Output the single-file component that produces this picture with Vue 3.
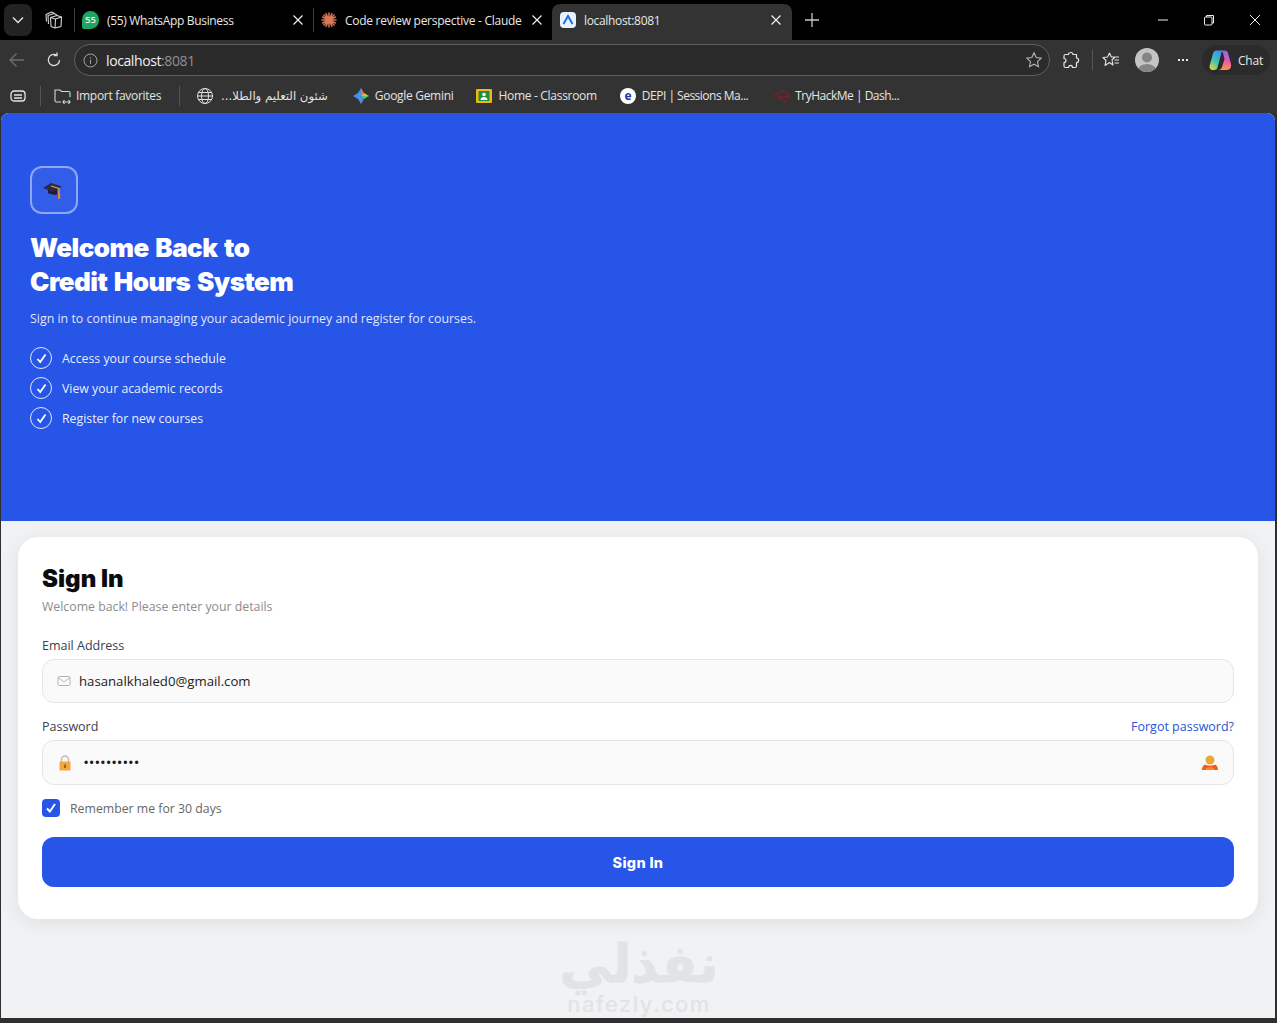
<script setup>
const features = ['Access your course schedule', 'View your academic records', 'Register for new courses']
</script>

<template>
  <div class="window">
    <div class="tabstrip">
      <button class="tab-menu" type="button">
        <svg width="14" height="14" viewBox="0 0 14 14"><path d="M2 4.500 7 9.500 12 4.500" fill="none" stroke="#e8e8e8" stroke-width="1.300" /></svg>
      </button>
      <svg class="workspaces" width="18" height="18" viewBox="0 0 18 18" fill="none" stroke="#d8d8d8" stroke-width="1.100" stroke-linejoin="round">
        <path d="M5.500 6.500 6 15.500 10 17 16 15.500 16.500 6 12 4.500Z" />
        <path d="M10 17 10.500 8 16.500 6M5.500 6.500 10.500 8" />
        <path d="M3.500 13 3 4.500 9 2.500 12 4M1.500 10.500 1 3.500 6.500 1 9 2" />
      </svg>
      <span class="tab-sep"></span>
      <div class="tab tab-wa">
        <span class="wa-badge">55</span>
        <span class="tab-title">(55) WhatsApp Business</span>
        <svg class="tab-x" width="12" height="12" viewBox="0 0 12 12"><path d="M1.500 1.500 10.500 10.500M10.500 1.500 1.500 10.500" stroke="#f0f0f0" stroke-width="1.200" /></svg>
      </div>
      <span class="tab-sep"></span>
      <div class="tab tab-claude">
        <svg width="16" height="16" viewBox="0 0 16 16" stroke="#d97757" stroke-width="1.500" stroke-linecap="round">
          <path d="M8 1v14M1 8h14M3 3l10 10M13 3 3 13M5 1.600l6 12.800M11 1.600 5 14.400M1.600 5l12.800 6M14.400 5 1.600 11" />
        </svg>
        <span class="tab-title">Code review perspective - Claude</span>
        <svg class="tab-x" width="12" height="12" viewBox="0 0 12 12"><path d="M1.500 1.500 10.500 10.500M10.500 1.500 1.500 10.500" stroke="#f0f0f0" stroke-width="1.200" /></svg>
      </div>
      <div class="tab tab-active">
        <span class="vite-icon">
          <svg width="12" height="12" viewBox="0 0 12 12"><path d="M1.500 10 6 2 10.500 10" fill="none" stroke="#1a73e8" stroke-width="2" /></svg>
        </span>
        <span class="tab-title">localhost:8081</span>
        <svg class="tab-x" width="12" height="12" viewBox="0 0 12 12"><path d="M1.500 1.500 10.500 10.500M10.500 1.500 1.500 10.500" stroke="#f0f0f0" stroke-width="1.200" /></svg>
      </div>
      <svg class="tab-plus" width="16" height="16" viewBox="0 0 16 16"><path d="M8 1v14M1 8h14" stroke="#c8c8c8" stroke-width="1.300" /></svg>
      <div class="win-controls">
        <svg width="12" height="12" viewBox="0 0 12 12"><path d="M1 6h10" stroke="#eee" stroke-width="1" /></svg>
        <svg width="12" height="12" viewBox="0 0 12 12" fill="none" stroke="#eee"><rect x="1.500" y="3" width="7.500" height="8" rx="1" /><path d="M3.500 3V1.500h7V9H9" /></svg>
        <svg width="12" height="12" viewBox="0 0 12 12"><path d="M1 1 11 11M11 1 1 11" stroke="#eee" stroke-width="1" /></svg>
      </div>
    </div>

    <div class="toolbar">
      <svg class="nav-back" width="18" height="18" viewBox="0 0 18 18" fill="none" stroke="#6d6d6d" stroke-width="1.300"><path d="M16 9H2M8.500 2.500 2 9l6.500 6.500" /></svg>
      <svg class="nav-reload" width="16" height="16" viewBox="0 0 16 16" fill="none" stroke="#dcdcdc" stroke-width="1.300"><path d="M13.500 8A5.600 5.600 0 1 1 10.800 3.200" /><path d="M11 .5v3.200H7.800" /></svg>
      <div class="address">
        <svg width="15" height="15" viewBox="0 0 15 15" fill="none" stroke="#a0a0a0"><circle cx="7.500" cy="7.500" r="6.500" /><path d="M7.500 6.500v4.500M7.500 4v1.200" /></svg>
        <span class="url">localhost<span class="url-port">:8081</span></span>
        <svg class="addr-star" width="18" height="18" viewBox="0 0 18 18" fill="none" stroke="#b4b4b4" stroke-width="1.100"><path d="M9 1.800l2.200 4.700 5 .6-3.700 3.500 1 5.100L9 13.200l-4.500 2.500 1-5.100L1.800 7.100l5-.6z" /></svg>
      </div>
      <svg class="tool-ext" width="18" height="18" viewBox="0 0 18 18" fill="none" stroke="#e4e4e4" stroke-width="1.200" stroke-linejoin="round"><path d="M6.500 3.500C6.500 .8 11 .8 11 3.500h3.500V7c2.800 0 2.800 4.500 0 4.500V15a1.500 1.500 0 0 1-1.500 1.500H10.500c0-2.800-4-2.800-4 0H3.500A1.500 1.500 0 0 1 2 15V11.500c2.600 0 2.600-4 0-4V5a1.500 1.500 0 0 1 1.500-1.500Z" /></svg>
      <span class="tool-sep"></span>
      <svg class="tool-fav" width="18" height="18" viewBox="0 0 18 18" fill="none" stroke="#e4e4e4" stroke-width="1.100" stroke-linejoin="round"><path d="M7.500 2 9.300 6H13L10 9 11 14 7.500 11.500 3 14.500 4 9.500 1 6.500 5.500 6ZM12.500 9h4.500M12.500 12h4.500M13.500 6H17" /></svg>
      <span class="avatar">
        <svg width="24" height="24" viewBox="0 0 24 24"><circle cx="12" cy="9.500" r="5" fill="#858585" /><ellipse cx="12" cy="22" rx="9" ry="6" fill="#858585" /></svg>
      </span>
      <span class="tool-more">
        <i></i><i></i><i></i>
      </span>
      <div class="chat-pill">
        <svg width="24" height="24" viewBox="0 0 24 24">
          <defs>
            <linearGradient id="cp-left" x1="0.700" y1="0" x2="0.200" y2="1">
              <stop offset="0" stop-color="#3f8ff0" />
              <stop offset="0.550" stop-color="#3fc7b0" />
              <stop offset="1" stop-color="#e6d23c" />
            </linearGradient>
            <linearGradient id="cp-right" x1="0.600" y1="0" x2="0.500" y2="1">
              <stop offset="0" stop-color="#7f6cf0" />
              <stop offset="0.500" stop-color="#e458b4" />
              <stop offset="1" stop-color="#f79a3e" />
            </linearGradient>
          </defs>
          <path d="M8.500 2.500h5.500L9.500 19.500c-.6 1.800-1.800 2.500-3.500 2.500H5C2.500 22 1 20 1.700 17.500L5 5.500C5.500 3.500 6.700 2.500 8.500 2.500Z" fill="url(#cp-left)" />
          <path d="M12 2.500h4.500c2 0 3 1 3.500 2.500l3 11c.6 3-1 6-4 6H10c2 0 3.500-1 4-3l2.500-8-1.500-6C14.500 3.500 13.500 2.500 12 2.500Z" fill="url(#cp-right)" />
        </svg>
        <span>Chat</span>
      </div>
    </div>

    <div class="bookmarks">
      <svg width="18" height="18" viewBox="0 0 18 18" fill="none" stroke="#e4e4e4" stroke-width="1.300"><rect x="2" y="4" width="14" height="10" rx="3" /><path d="M5 8h8M5 11h8" /></svg>
      <span class="bm-sep bm-sep-first"></span>
      <div class="bm bm-import">
        <svg width="18" height="18" viewBox="0 0 18 18" fill="none" stroke="#d8d8d8" stroke-width="1.100"><path d="M8 15H3.500A1.500 1.500 0 0 1 2 13.500V3h5l1.500 1.500H15.500A1.500 1.500 0 0 1 17 6v4M10 15h7M11.500 13 10 15l1.500 2M15.500 13 17 15l-1.500 2" /></svg>
        <span>Import favorites</span>
      </div>
      <span class="bm-sep bm-sep-second"></span>
      <div class="bm bm-globe">
        <svg width="18" height="18" viewBox="0 0 18 18" fill="none" stroke="#e0e0e0"><circle cx="9" cy="9" r="7.500" /><ellipse cx="9" cy="9" rx="3.500" ry="7.500" /><path d="M1.500 9h15M2.500 5.500h13M2.500 12.500h13" /></svg>
        <span class="bm-ar" dir="rtl">شئون التعليم والطلا...</span>
      </div>
      <div class="bm">
        <svg width="16" height="16" viewBox="0 0 16 16"><path d="M8 0 11 5 8 8Z" fill="#e8734e" /><path d="M16 8 11 5 8 8Z" fill="#f3b23e" /><path d="M8 16 11 11 8 8Z" fill="#4a8fe8" /><path d="M16 8 11 11 8 8Z" fill="#59c46e" /><path d="M0 8 5 5 8 0 8 16 5 11Z" fill="#4a8fe8" /></svg>
        <span>Google Gemini</span>
      </div>
      <div class="bm">
        <svg width="16" height="16" viewBox="0 0 16 16"><rect width="16" height="14" y="1" rx="1" fill="#f2b90f" /><rect x="2.500" y="3" width="11" height="10" fill="#1f8e46" /><circle cx="8" cy="6.500" r="1.800" fill="#fff" /><path d="M4.500 12c0-2 1.500-3 3.500-3s3.500 1 3.500 3Z" fill="#fff" /></svg>
        <span>Home - Classroom</span>
      </div>
      <div class="bm bm-tight bm-depi">
        <span class="depi-icon">e</span>
        <span>DEPI | Sessions Ma...</span>
      </div>
      <div class="bm bm-tight bm-thm">
        <svg width="18" height="18" viewBox="0 0 18 18" fill="none" stroke="#7d1f26" stroke-width="1.400"><path d="M1.500 10c0-1.500 1.200-2.800 3-2.800C5.500 4 9.500 3 11 5.500 13.500 5 16 7 16 10H5M9.500 12l4 4M5 10c1 2 2 3 4 3" /></svg>
        <span>TryHackMe | Dash...</span>
      </div>
    </div>

    <main class="page">
      <section class="hero">
        <div class="hero-logo">
          <svg width="22" height="22" viewBox="0 0 22 22">
            <path d="M6 9v5c3 1.500 6 2 9 1.500V10Z" fill="#1d1b33" />
            <path d="M1 9 9 4 20 7.500 11 13Z" fill="#2b2946" />
            <path d="M9 7 17 9.500V16" fill="none" stroke="#e8a13c" stroke-width="1.300" />
            <rect x="16" y="14" width="2.200" height="6" rx="1" fill="#e8843c" />
          </svg>
        </div>
        <h1 class="hero-title">Welcome Back to<br />Credit Hours System</h1>
        <p class="hero-sub">Sign in to continue managing your academic journey and register for courses.</p>
        <ul class="feature-list">
          <li v-for="item in features" :key="item" class="feature">
            <span class="feature-check">
              <svg width="11" height="11" viewBox="0 0 11 11"><path d="M1.500 6 4.200 9 9.500 1.500" fill="none" stroke="#fff" stroke-width="1.800" /></svg>
            </span>
            {{ item }}
          </li>
        </ul>
      </section>

      <section class="content">
        <form class="card" @submit.prevent>
          <h2 class="card-title">Sign In</h2>
          <p class="card-sub">Welcome back! Please enter your details</p>

          <label class="field-label field-label-email">Email Address</label>
          <div class="input">
            <svg width="14" height="12" viewBox="0 0 14 12" fill="none" stroke="#b5b5b5"><rect x="1" y="1.500" width="12" height="9" rx="1" /><path d="M1 2.500 7 7l6-4.500" /></svg>
            <span class="input-text">hasanalkhaled0@gmail.com</span>
          </div>

          <div class="label-row">
            <label class="field-label">Password</label>
            <a class="forgot" href="#">Forgot password?</a>
          </div>
          <div class="input input-pass">
            <svg width="14" height="16" viewBox="0 0 14 16">
              <path d="M3.500 7V4.500a3.500 3.500 0 0 1 7 0V7" fill="none" stroke="#c2bcae" stroke-width="1.500" />
              <rect x="1.500" y="6.500" width="11" height="9" rx="1" fill="#f4a640" />
              <rect x="6.300" y="9.500" width="1.400" height="3.500" fill="#7a4a12" />
            </svg>
            <span class="dots">••••••••••</span>
            <svg class="eye" width="18" height="16" viewBox="0 0 18 16">
              <circle cx="9" cy="5" r="4.500" fill="#e8a93a" />
              <path d="M1 15c0-3 1.500-5 3-5.500 1.500 1.500 8.500 1.500 10 0 1.500.5 3 2.500 3 5.500Z" fill="#f0581f" />
              <path d="M4 15c1-2 2-3 5-3s4 1 5 3Z" fill="#f98a2c" />
            </svg>
          </div>

          <div class="remember">
            <span class="checkbox">
              <svg width="12" height="12" viewBox="0 0 12 12"><path d="M2 6.500 4.800 9.500 10 2" fill="none" stroke="#fff" stroke-width="2" /></svg>
            </span>
            <span>Remember me for 30 days</span>
          </div>

          <button class="submit" type="submit">Sign In</button>
        </form>
      </section>

      <div class="watermark">
        <span class="wm-ar">نفذلي</span>
        <span class="wm-en">nafezly.com</span>
      </div>
    </main>
  </div>
</template>

<style>
html,
body {
  margin: 0;
  background: #333;
}
</style>

<style scoped>
.window {
  width: 1277px;
  height: 1023px;
  display: flex;
  flex-direction: column;
  overflow: hidden;
  background: #2f2f2f;
  font-family: 'Open Sans', 'Liberation Sans', 'Noto Sans CJK SC', sans-serif;
  color: #e8e8e8;
}

/* browser chrome */
.tabstrip {
  height: 40px;
  flex: none;
  display: flex;
  align-items: flex-end;
  background: #000;
  font-size: 12px;
}

.tab-menu {
  width: 28px;
  height: 32px;
  margin: 0 0 4px 4px;
  padding: 0;
  border: none;
  border-radius: 8px;
  background: #232323;
  display: flex;
  align-items: center;
  justify-content: center;
}

.workspaces {
  margin: 0 11px 11px 13px;
}

.tab-sep {
  width: 1px;
  height: 24px;
  margin-bottom: 8px;
  background: #3f3f3f;
}

.tab {
  height: 36px;
  display: flex;
  align-items: center;
  gap: 8px;
  box-sizing: border-box;
}

.tab-title {
  flex: 1;
  white-space: nowrap;
  letter-spacing: -0.33px;
}

.tab-x {
  flex: none;
}

.tab-wa {
  width: 238px;
  padding: 0 9px 4px 7px;
}

.tab-claude {
  width: 238px;
  padding: 0 9px 4px 7px;
}

.tab-claude .tab-title {
  letter-spacing: -0.27px;
}

.tab-active {
  width: 240px;
  padding: 0 10px 4px 8px;
  border-radius: 8px 8px 0 0;
  background: #333;
}

.wa-badge {
  width: 17px;
  height: 18px;
  border-radius: 9px 9px 9px 3px;
  background: #1fa463;
  color: #e6f6ec;
  font-size: 9.500px;
  line-height: 18px;
  text-align: center;
  font-weight: 600;
}

.vite-icon {
  width: 16px;
  height: 16px;
  border-radius: 4px;
  background: #e8f1fd;
  display: flex;
  align-items: center;
  justify-content: center;
}

.tab-plus {
  margin: 0 0 12px 12px;
}

.win-controls {
  margin-left: auto;
  width: 104px;
  margin-right: 16px;
  margin-bottom: 14px;
  display: flex;
  justify-content: space-between;
}

.toolbar {
  height: 40px;
  flex: none;
  display: flex;
  align-items: center;
  background: #333;
}

.nav-back {
  margin-left: 8px;
}

.nav-reload {
  margin-left: 20px;
}

.address {
  width: 976px;
  height: 32px;
  margin-left: 12px;
  padding: 0 6px 0 8px;
  box-sizing: border-box;
  display: flex;
  align-items: center;
  gap: 8px;
  border: 1px solid #5f5f5f;
  border-radius: 16px;
  background: #2b2b2b;
}

.url {
  font-size: 14px;
  letter-spacing: -0.4px;
  color: #f0f0f0;
}

.url-port {
  color: #8f8f8f;
}

.addr-star {
  margin-left: auto;
}

.tool-ext {
  margin-left: 12px;
}

.tool-sep {
  width: 1px;
  height: 20px;
  margin-left: 12px;
  background: #555;
}

.tool-fav {
  margin-left: 9px;
}

.avatar {
  width: 24px;
  height: 24px;
  margin-left: 15px;
  border-radius: 50%;
  background: #c4c4c4;
  overflow: hidden;
}

.tool-more {
  width: 22px;
  margin-left: 13px;
  display: flex;
  justify-content: center;
  gap: 2px;
}

.tool-more i {
  width: 2px;
  height: 2px;
  background: #eee;
}

.chat-pill {
  width: 68px;
  height: 30px;
  margin-left: 8px;
  padding-left: 6px;
  box-sizing: border-box;
  display: flex;
  align-items: center;
  gap: 6px;
  border-radius: 15px;
  background: #2b2b2b;
  font-size: 12px;
  letter-spacing: -0.2px;
}

.bookmarks {
  height: 33px;
  flex: none;
  display: flex;
  align-items: center;
  box-sizing: border-box;
  padding: 0 0 2px 9px;
  background: #333;
  font-size: 12px;
  letter-spacing: -0.3px;
}

.bm-sep {
  width: 1px;
  height: 20px;
  background: #555;
}

.bm-sep-first {
  margin: 0 12px 0 13px;
}

.bm-sep-second {
  margin: 0 16px 0 0;
}

.bm {
  display: flex;
  align-items: center;
  gap: 6px;
  margin-right: 23px;
  white-space: nowrap;
  color: #e4e4e4;
}

.bm-import {
  gap: 5px;
  margin-right: 18px;
}

.bm-globe {
  gap: 7px;
  margin-right: 25px;
}

.bm-tight {
  letter-spacing: -0.5px;
}

.bm-depi {
  margin-right: 25px;
}

.bm-thm {
  gap: 4px;
}

.bm-ar {
  font-family: 'DejaVu Sans', sans-serif;
  font-size: 11.700px;
  letter-spacing: 0;
}

.depi-icon {
  width: 16px;
  height: 16px;
  border-radius: 50%;
  background: #fff;
  color: #2233aa;
  font-size: 12px;
  font-weight: 700;
  line-height: 15px;
  text-align: center;
}

/* page */
.page {
  position: relative;
  width: 1274px;
  height: 905px;
  margin-left: 1px;
  flex: none;
  overflow: hidden;
  border-radius: 8px 8px 0 0;
  background: #f0f2f4;
  color: #111;
}

.hero {
  height: 408px;
  box-sizing: border-box;
  padding: 53px 29px 0;
  background: #2755e8;
  color: #fff;
}

.hero-logo {
  width: 48px;
  height: 48px;
  box-sizing: border-box;
  display: flex;
  align-items: center;
  justify-content: center;
  padding-right: 3px;
  border: 2px solid rgba(255, 255, 255, 0.45);
  border-radius: 12px;
  background: rgba(255, 255, 255, 0.05);
}

.hero-title {
  margin: 17px 0 0;
  font-family: 'Inter', 'Open Sans', sans-serif;
  font-size: 26px;
  font-weight: 900;
  line-height: 34px;
  letter-spacing: -0.55px;
  word-spacing: 2px;
}

.hero-sub {
  margin: 10px 0 0;
  font-size: 12.400px;
  line-height: 20px;
  color: rgba(255, 255, 255, 0.88);
}

.feature-list {
  margin: 14px 0 0;
  padding: 0;
  list-style: none;
}

.feature {
  height: 30px;
  display: flex;
  align-items: center;
  gap: 10px;
  font-size: 12.300px;
  color: rgba(255, 255, 255, 0.92);
}

.feature-check {
  width: 22px;
  height: 22px;
  box-sizing: border-box;
  display: flex;
  align-items: center;
  justify-content: center;
  border: 1px solid rgba(255, 255, 255, 0.85);
  border-radius: 50%;
}

.content {
  padding: 16px 17px 0;
}

.card {
  height: 382px;
  box-sizing: border-box;
  padding: 24px;
  border-radius: 20px;
  background: #fff;
  box-shadow: 0 4px 20px rgba(0, 0, 0, 0.08);
}

.card-title {
  margin: 0;
  font-family: 'Inter', 'Open Sans', sans-serif;
  font-size: 24px;
  font-weight: 900;
  line-height: 36px;
  color: #0c0c0f;
}

.card-sub {
  margin: 1px 0 0;
  font-size: 12.300px;
  line-height: 18px;
  color: #8c8c8c;
}

.field-label {
  display: block;
  font-size: 12.500px;
  font-weight: 500;
  line-height: 18px;
  color: #374151;
}

.field-label-email {
  margin: 21px 0 4px;
}

.label-row {
  display: flex;
  justify-content: space-between;
  align-items: center;
  margin: 14px 0 4px;
}

.label-row .field-label {
  padding-top: 1px;
}

.forgot {
  font-size: 12.500px;
  font-weight: 500;
  color: #2755d8;
  text-decoration: none;
}

.input {
  height: 44px;
  box-sizing: border-box;
  display: flex;
  align-items: center;
  gap: 8px;
  padding: 0 14px;
  border: 1px solid #e3e5e8;
  border-radius: 12px;
  background: #fafafa;
}

.input-pass {
  height: 45px;
  gap: 12px;
  padding: 0 14px 0 15px;
}

.input-text {
  font-size: 13.200px;
  color: #222;
}

.dots {
  padding-top: 1px;
  font-family: 'Liberation Sans', sans-serif;
  font-size: 12px;
  letter-spacing: 1.400px;
  color: #1c1c1c;
}

.eye {
  margin-left: auto;
}

.remember {
  display: flex;
  align-items: center;
  gap: 10px;
  margin-top: 14px;
  font-size: 12.300px;
  color: #666;
}

.checkbox {
  width: 18px;
  height: 18px;
  display: flex;
  align-items: center;
  justify-content: center;
  border-radius: 4px;
  background: #2755e8;
}

.submit {
  display: block;
  width: 100%;
  height: 50px;
  margin-top: 20px;
  border: none;
  border-radius: 12px;
  background: #2755e8;
  color: #fff;
  font-family: 'Inter', sans-serif;
  font-size: 14.500px;
  font-weight: 800;
  letter-spacing: 0.3px;
}

.watermark {
  position: absolute;
  left: 540px;
  bottom: 0;
  width: 196px;
  display: flex;
  flex-direction: column;
  align-items: center;
  color: #e1e3e6;
}

.wm-ar {
  font-family: 'DejaVu Sans', sans-serif;
  font-size: 52px;
  font-weight: 700;
  line-height: 53px;
  -webkit-text-stroke: 1px #e1e3e6;
}

.wm-en {
  font-family: 'Inter', sans-serif;
  font-size: 22px;
  font-weight: 500;
  letter-spacing: 1.400px;
  line-height: 27px;
}
</style>
